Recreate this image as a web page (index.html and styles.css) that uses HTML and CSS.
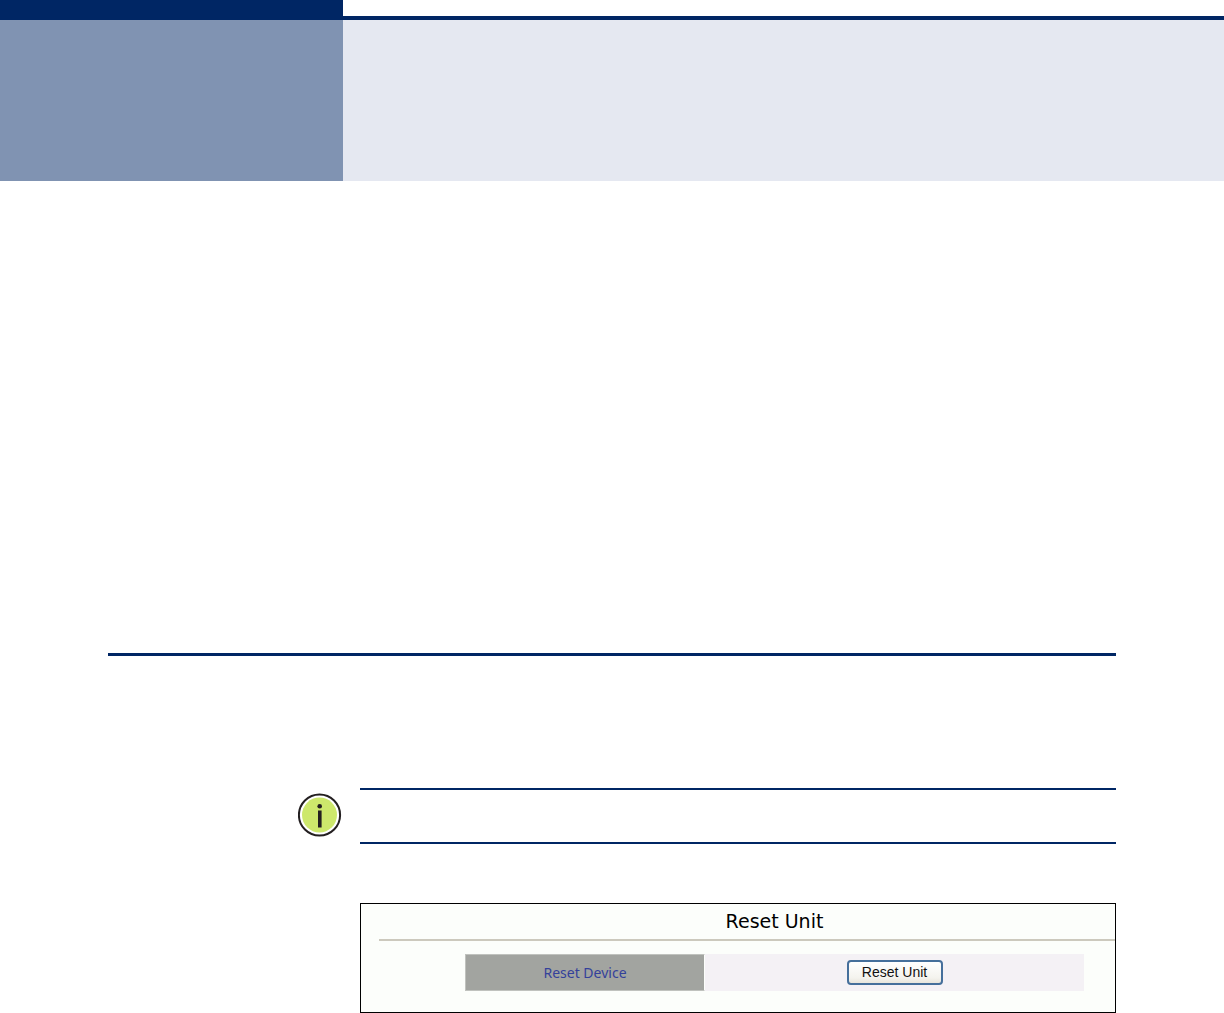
FILE: index.html
```html
<!DOCTYPE html>
<html lang="en">
<head>
<meta charset="utf-8">
<title>Reset Unit</title>
<link rel="stylesheet" href="styles.css">
</head>
<body>
<header class="banner">
  <div class="banner-tab"></div>
  <div class="banner-bar"></div>
</header>
<main class="content">
  <hr class="section-rule">
  <div class="note">
    <svg class="note-icon" viewBox="0 0 44 44" role="img" aria-label="Note">
      <circle cx="21.5" cy="22" r="20.6" fill="#fff" stroke="#231f20" stroke-width="2"/>
      <circle cx="21.5" cy="22" r="17.5" fill="#cde86c"/>
      <circle cx="21.7" cy="13.2" r="2.3" fill="#231f20"/>
      <rect x="20" y="17.5" width="3.6" height="17" fill="#231f20"/>
    </svg>
    <div class="note-body"></div>
  </div>
  <section class="panel">
    <h1 class="panel-title">Reset Unit</h1>
    <table class="settings">
      <tr>
        <th class="setting-name" scope="row">Reset Device</th>
        <td class="setting-value"><button class="reset-button" type="button">Reset Unit</button></td>
      </tr>
    </table>
  </section>
</main>
</body>
</html>
```
FILE: styles.css
```css
* {
  box-sizing: border-box;
}

body {
  margin: 0;
  background: #fff;
  font-family: "DejaVu Sans", Verdana, sans-serif;
}

.banner {
  display: grid;
  grid-template-columns: 28% 1fr;
  height: 181px;
}

.banner-tab {
  border-top: 20px solid #002664;
  background: #8093b2;
}

.banner-bar {
  margin-top: 16px;
  border-top: 4px solid #002664;
  background: #e5e8f1;
}

.content {
  padding: 472px 108px 0;
}

.section-rule {
  height: 3px;
  margin: 0 0 132px;
  border: 0;
  background: #002664;
}

.note {
  display: flex;
  gap: 18px;
  margin-left: 190px;
}

.note-icon {
  flex: none;
  width: 44px;
  height: 44px;
  margin-top: 5px;
}

.note-body {
  flex: 1;
  height: 56px;
  border-top: 2px solid #002664;
  border-bottom: 2px solid #002664;
}

.panel {
  height: 110px;
  margin: 59px 0 0 252px;
  padding-left: 18px;
  border: 1px solid #000;
  background: #fcfefb;
}

.panel-title {
  height: 37px;
  margin: 0;
  padding: 0 31px 0 86px;
  border-bottom: 2px solid #ccc9bd;
  font-size: 19px;
  font-weight: 400;
  line-height: 34px;
  text-align: center;
  color: #000;
}

.settings {
  width: calc(100% - 117px);
  height: 37px;
  margin: 13px 31px 0 86px;
  border-spacing: 0;
  table-layout: fixed;
}

.setting-name,
.setting-value {
  padding: 0;
  text-align: center;
}

.setting-name {
  width: 240px;
  border: 1px solid #c0c2be;
  border-right-color: #fcfefb;
  background: #a2a4a0;
  font-family: "Noto Sans", Tahoma, sans-serif;
  font-size: 14px;
  font-weight: 400;
  line-height: 20px;
  color: #34419a;
}

.setting-value {
  background: #f4f1f5;
}

.reset-button {
  display: block;
  width: 96px;
  height: 25px;
  margin: 0 auto;
  padding: 0 0 2px;
  border: 2px solid #456f9b;
  border-radius: 4px;
  background: linear-gradient(#fff, #f4f3ee 75%, #e8e5dc);
  font-family: "Liberation Sans", Arial, sans-serif;
  font-size: 14px;
  color: #111;
}
```
